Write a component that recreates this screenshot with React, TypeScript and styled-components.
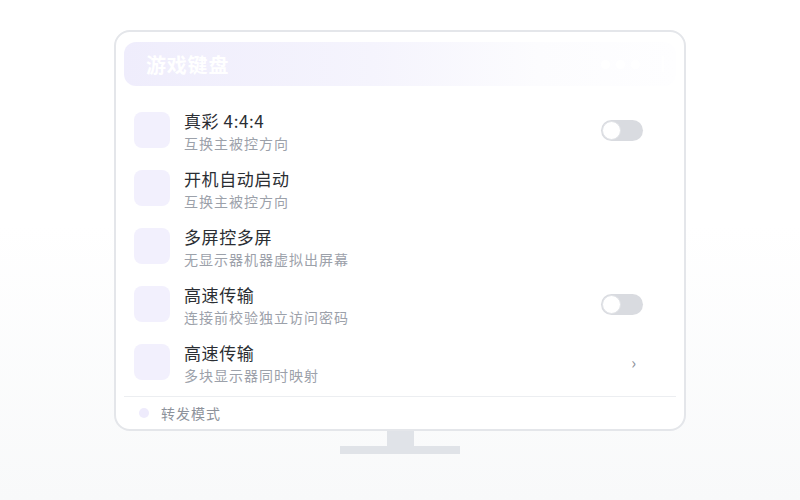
import styled, { createGlobalStyle } from 'styled-components'

const Global = createGlobalStyle`
  html, body { margin: 0; padding: 0; }
  body {
    width: 800px;
    height: 500px;
    overflow: hidden;
    background: linear-gradient(180deg, #ffffff 0%, #ffffff 45%, #f8f9fa 100%);
    font-family: "Noto Sans CJK SC", "Noto Sans", sans-serif;
  }
`

const Stage = styled.div`
  display: flex;
  flex-direction: column;
  align-items: center;
  padding-top: 30px;
`

const Screen = styled.div`
  box-sizing: border-box;
  width: 572px;
  height: 401px;
  border: 2px solid #e4e6ea;
  border-radius: 16px;
  background: #fff;
  padding: 10px 8px 0;
  display: flex;
  flex-direction: column;
`

const Header = styled.div`
  height: 44px;
  border-radius: 12px;
  background: linear-gradient(90deg, #efedfc 0%, #f5f4fd 45%, #fcfcfe 75%, #fefeff 100%);
  display: flex;
  align-items: center;
  padding: 0 12px 0 22px;
  color: #fff;
  font-size: 20px;
  font-weight: 700;
  letter-spacing: 0.8px;
`

const HeaderTitle = styled.span`
  flex: 1;
`

const Dots = styled.div`
  display: flex;
  gap: 6px;
  margin-right: 22px;
`

const Dot = styled.span`
  width: 9px;
  height: 9px;
  border-radius: 50%;
  background: #fff;
`

const VLine = styled.span`
  width: 2px;
  height: 16px;
  background: #fff;
`

const List = styled.div`
  display: flex;
  flex-direction: column;
  padding: 15px 0 5px;
  border-bottom: 1px solid #eceef1;
`

const Row = styled.div`
  height: 58px;
  display: flex;
  align-items: center;
  padding: 0 33px 0 10px;
`

const IconBox = styled.div`
  width: 36px;
  height: 36px;
  border-radius: 8px;
  background: #f2f0fd;
  flex-shrink: 0;
`

const Texts = styled.div`
  flex: 1;
  margin-left: 14px;
  display: flex;
  flex-direction: column;
`

const Title = styled.div`
  font-size: 17px;
  line-height: 25px;
  color: #2b2e33;
  letter-spacing: 0.6px;
`

const Sub = styled.div`
  font-size: 14px;
  line-height: 20px;
  color: #9ca1aa;
  letter-spacing: 1px;
`

const Toggle = styled.div`
  width: 42px;
  height: 21px;
  border-radius: 11px;
  background: #d9dbe0;
  position: relative;
`

const Knob = styled.span`
  position: absolute;
  left: 1px;
  top: 1px;
  width: 19px;
  height: 19px;
  border-radius: 50%;
  background: #fff;
  box-sizing: border-box;
  border: 1px solid #e1e3e7;
`

const Chevron = styled.span`
  color: #8b9099;
  font-size: 16px;
  margin-right: 7px;
`

const Footer = styled.div`
  flex: 1;
  display: flex;
  align-items: center;
  padding-left: 15px;
  gap: 12px;
  color: #8d929b;
  font-size: 14px;
  letter-spacing: 1px;
`

const FooterDot = styled.span`
  width: 10px;
  height: 10px;
  border-radius: 50%;
  background: #eeebfc;
`

const Neck = styled.div`
  width: 27px;
  height: 15px;
  background: #e0e3e8;
`

const Base = styled.div`
  width: 120px;
  height: 8px;
  background: #e0e3e8;
`

type Item = { title: string; sub: string; trail?: 'toggle' | 'chevron' }

const items: Item[] = [
  { title: '真彩 4:4:4', sub: '互换主被控方向', trail: 'toggle' },
  { title: '开机自动启动', sub: '互换主被控方向' },
  { title: '多屏控多屏', sub: '无显示器机器虚拟出屏幕' },
  { title: '高速传输', sub: '连接前校验独立访问密码', trail: 'toggle' },
  { title: '高速传输', sub: '多块显示器同时映射', trail: 'chevron' },
]

export default function App() {
  return (
    <>
      <Global />
      <Stage>
        <Screen>
          <Header>
            <HeaderTitle>游戏键盘</HeaderTitle>
            <Dots>
              <Dot />
              <Dot />
              <Dot />
            </Dots>
            <VLine />
          </Header>
          <List>
            {items.map((it, i) => (
              <Row key={i}>
                <IconBox />
                <Texts>
                  <Title>{it.title}</Title>
                  <Sub>{it.sub}</Sub>
                </Texts>
                {it.trail === 'toggle' && (
                  <Toggle>
                    <Knob />
                  </Toggle>
                )}
                {it.trail === 'chevron' && <Chevron>›</Chevron>}
              </Row>
            ))}
          </List>
          <Footer>
            <FooterDot />
            <span>转发模式</span>
          </Footer>
        </Screen>
        <Neck />
        <Base />
      </Stage>
    </>
  )
}
